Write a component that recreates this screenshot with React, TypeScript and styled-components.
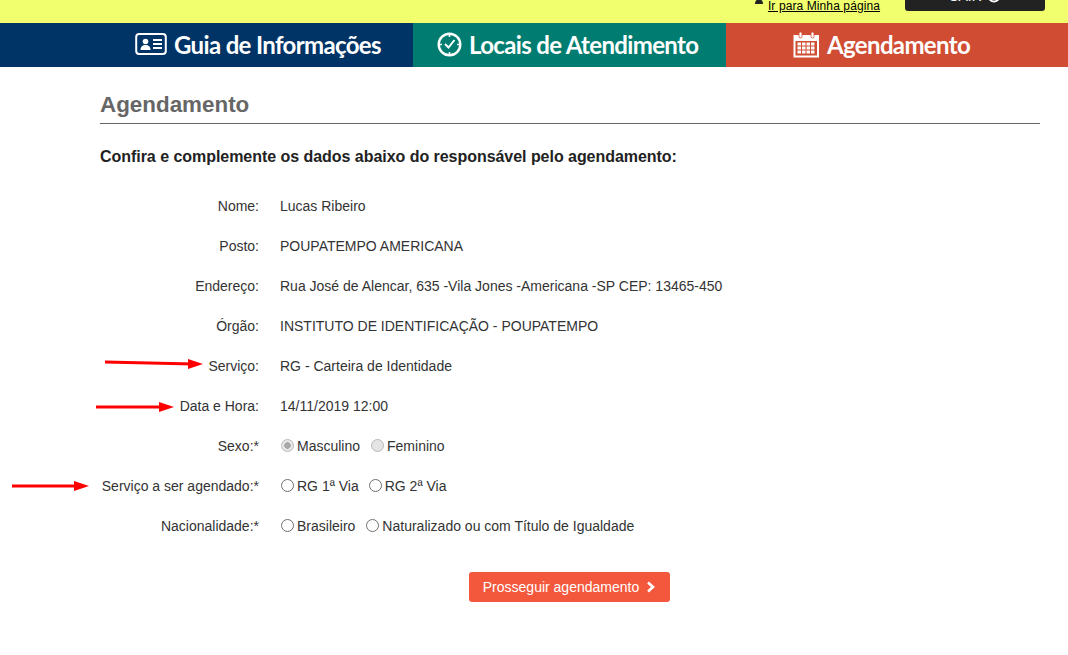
import React from "react";
import styled, { createGlobalStyle } from "styled-components";

const GlobalStyle = createGlobalStyle`
  html, body {
    margin: 0;
    padding: 0;
    background: #fff;
    font-family: "Liberation Sans", Arial, sans-serif;
    color: #333;
  }
`;

const Page = styled.div`
  position: relative;
  width: 1068px;
  height: 655px;
  overflow: hidden;
`;

const TopBar = styled.div`
  height: 23px;
  background: #f1ff6f;
  display: flex;
  justify-content: flex-end;
  align-items: flex-end;
  overflow: hidden;
  padding: 0 23px 12px 0;
  box-sizing: border-box;
`;

const MyPageLink = styled.a`
  display: flex;
  align-items: flex-end;
  font-size: 12px;
  line-height: 14px;
  letter-spacing: 0.1px;
  color: #000;
  margin-right: 25px;
  margin-bottom: -2px;
  svg {
    margin: 0 4px 9px 0;
  }
  span {
    text-decoration: underline;
  }
`;

const ExitButton = styled.div`
  width: 140px;
  height: 30px;
  flex: none;
  background: #222;
  border-radius: 3px;
  color: #fff;
  font-size: 14px;
  display: flex;
  align-items: flex-end;
  justify-content: center;
  gap: 5px;
  line-height: 14px;
  padding-bottom: 8px;
  box-sizing: border-box;
`;

const Nav = styled.nav`
  display: grid;
  grid-template-columns: 413px 313px 342px;
  height: 44px;
`;

const NavItem = styled.a<{ $bg: string; $left: number; $gap: number }>`
  background: ${(p) => p.$bg};
  padding: 0 0 2px ${(p) => p.$left}px;
  display: flex;
  align-items: center;
  gap: ${(p) => p.$gap}px;
  color: #fff;
  font-family: Lato, sans-serif;
  font-weight: 700;
  font-size: 24px;
  letter-spacing: -0.65px;
  white-space: nowrap;
  svg {
    flex: none;
  }
`;

const Content = styled.main`
  padding: 21px 28px 0 100px;
`;

const Title = styled.h1`
  margin: 0;
  padding-bottom: 1px;
  font-size: 22.4px;
  line-height: 34px;
  font-weight: 700;
  color: #666;
  border-bottom: 1px solid #666;
`;

const Subtitle = styled.h2`
  margin: 23px 0 19px;
  font-size: 16px;
  line-height: 20px;
  font-weight: 700;
  letter-spacing: -0.04px;
  color: #222;
`;

const Form = styled.div`
  display: flex;
  flex-direction: column;
`;

const Row = styled.div`
  display: grid;
  grid-template-columns: 159px 1fr;
  column-gap: 21px;
  align-items: center;
  height: 40px;
  font-size: 14px;
`;

const Label = styled.label`
  text-align: right;
`;

const Options = styled.div`
  display: flex;
  align-items: center;
`;

const Option = styled.label<{ $gap?: number }>`
  display: flex;
  align-items: center;
  margin-right: ${(p) => p.$gap ?? 10}px;
`;

const Radio = styled.input.attrs({ type: "radio" })`
  appearance: none;
  box-sizing: border-box;
  width: 13px;
  height: 13px;
  margin: 0 3px 2px 1px;
  border: 1.5px solid #707070;
  border-radius: 50%;
  background: #fff;
  flex: none;

  &:disabled {
    border-color: #b8b8b8;
    background: #e4e4e4;
  }

  &:checked {
    background: radial-gradient(circle, #a8a8a8 0 3px, #e8e8e8 3.6px);
  }
`;

const Actions = styled.div`
  display: flex;
  margin: 26px 0 0 369px;
`;

const SubmitButton = styled.button`
  width: 201px;
  height: 30px;
  border: 0;
  border-radius: 3px;
  background: #f4583c;
  color: #fff;
  font-family: inherit;
  font-size: 14px;
  display: flex;
  align-items: center;
  justify-content: center;
  gap: 7px;
  padding: 0;
`;

const ArrowLayer = styled.svg`
  position: absolute;
  left: 0;
  top: 0;
  pointer-events: none;
`;

const CardIcon = () => (
  <svg width="32" height="24" viewBox="0 0 32 24" fill="none">
    <rect x="1.2" y="2" width="29.6" height="20" rx="3" stroke="#fff" strokeWidth="2" />
    <circle cx="10.5" cy="9.5" r="2.8" fill="#fff" />
    <path d="M5.5 18c0-3.5 2-5 5-5s5 1.5 5 5z" fill="#fff" />
    <path d="M18 8h9M18 12h9M18 16h9" stroke="#fff" strokeWidth="1.8" />
  </svg>
);

const ClockIcon = () => (
  <svg width="25" height="25" viewBox="0 0 25 25" fill="none">
    <circle cx="12.5" cy="12.5" r="10.8" stroke="#fff" strokeWidth="2.4" />
    <path d="M12.5 2v3M12.5 20v3M2 12.5h3M20 12.5h3" stroke="#fff" strokeWidth="1.6" />
    <path d="M8 12l3.5 3.5L17.5 8" stroke="#fff" strokeWidth="2" />
  </svg>
);

const CalendarIcon = () => (
  <svg width="27" height="27" viewBox="0 0 27 27" fill="#fff">
    <path d="M0.5 4h25.5v22.5H0.5zM2.5 10v14.5h21.5V10z" fillRule="evenodd" />
    <rect x="6" y="1" width="3" height="6" rx="1.5" stroke="#d04c32" strokeWidth="0.8" />
    <rect x="18" y="1" width="3" height="6" rx="1.5" stroke="#d04c32" strokeWidth="0.8" />
    {[11.5, 15.5, 19.5].map((y) =>
      [4.5, 9, 13.5, 18].map((x) => <rect key={`${x}-${y}`} x={x} y={y} width="3.5" height="3" />)
    )}
  </svg>
);

const Arrow = ({ x1, y1, x2, y2 }: { x1: number; y1: number; x2: number; y2: number }) => (
  <g>
    <line x1={x1} y1={y1} x2={x2 - 10} y2={y2} stroke="#f00" strokeWidth="3" />
    <polygon points={`${x2 - 15},${y2 - 5} ${x2},${y2} ${x2 - 15},${y2 + 5}`} fill="#f00" />
  </g>
);

export default function App() {
  return (
    <Page>
      <GlobalStyle />
      <TopBar>
        <MyPageLink>
          <svg width="10" height="8" viewBox="0 0 10 8" fill="#222">
            <circle cx="5" cy="1" r="2.5" />
            <path d="M1 8c0-3 1.5-4.5 4-4.5S9 5 9 8z" />
          </svg>
          <span>Ir para Minha página</span>
        </MyPageLink>
        <ExitButton>
          SAIR
          <svg width="14" height="14" viewBox="0 0 14 14" fill="none">
            <circle cx="7" cy="7" r="5.5" stroke="#fff" strokeWidth="2" />
          </svg>
        </ExitButton>
      </TopBar>
      <Nav>
        <NavItem $bg="#003366" $left={135} $gap={7}>
          <CardIcon />
          Guia de Informações
        </NavItem>
        <NavItem $bg="#007d70" $left={24} $gap={7}>
          <ClockIcon />
          Locais de Atendimento
        </NavItem>
        <NavItem $bg="#d04c32" $left={67} $gap={7}>
          <CalendarIcon />
          Agendamento
        </NavItem>
      </Nav>
      <Content>
        <Title>Agendamento</Title>
        <Subtitle>Confira e complemente os dados abaixo do responsável pelo agendamento:</Subtitle>
        <Form>
          <Row>
            <Label>Nome:</Label>
            <span>Lucas Ribeiro</span>
          </Row>
          <Row>
            <Label>Posto:</Label>
            <span>POUPATEMPO AMERICANA</span>
          </Row>
          <Row>
            <Label>Endereço:</Label>
            <span>Rua José de Alencar, 635 -Vila Jones -Americana -SP CEP: 13465-450</span>
          </Row>
          <Row>
            <Label>Órgão:</Label>
            <span>INSTITUTO DE IDENTIFICAÇÃO - POUPATEMPO</span>
          </Row>
          <Row>
            <Label>Serviço:</Label>
            <span>RG - Carteira de Identidade</span>
          </Row>
          <Row>
            <Label>Data e Hora:</Label>
            <span>14/11/2019 12:00</span>
          </Row>
          <Row>
            <Label>Sexo:*</Label>
            <Options>
              <Option>
                <Radio name="sexo" disabled defaultChecked />
                Masculino
              </Option>
              <Option>
                <Radio name="sexo" disabled />
                Feminino
              </Option>
            </Options>
          </Row>
          <Row>
            <Label>Serviço a ser agendado:*</Label>
            <Options>
              <Option $gap={9}>
                <Radio name="servico" />
                RG 1ª Via
              </Option>
              <Option>
                <Radio name="servico" />
                RG 2ª Via
              </Option>
            </Options>
          </Row>
          <Row>
            <Label>Nacionalidade:*</Label>
            <Options>
              <Option>
                <Radio name="nacionalidade" />
                Brasileiro
              </Option>
              <Option>
                <Radio name="nacionalidade" />
                Naturalizado ou com Título de Igualdade
              </Option>
            </Options>
          </Row>
        </Form>
        <Actions>
          <SubmitButton>
            Prosseguir agendamento
            <svg width="10" height="12" viewBox="0 0 10 12" fill="none">
              <path d="M2 1.5L7 6l-5 4.5" stroke="#fff" strokeWidth="2.6" />
            </svg>
          </SubmitButton>
        </Actions>
      </Content>
      <ArrowLayer width="1068" height="655">
        <Arrow x1={105} y1={362} x2={203} y2={364} />
        <Arrow x1={96} y1={407} x2={174} y2={407} />
        <Arrow x1={12} y1={486} x2={89} y2={486} />
      </ArrowLayer>
    </Page>
  );
}
